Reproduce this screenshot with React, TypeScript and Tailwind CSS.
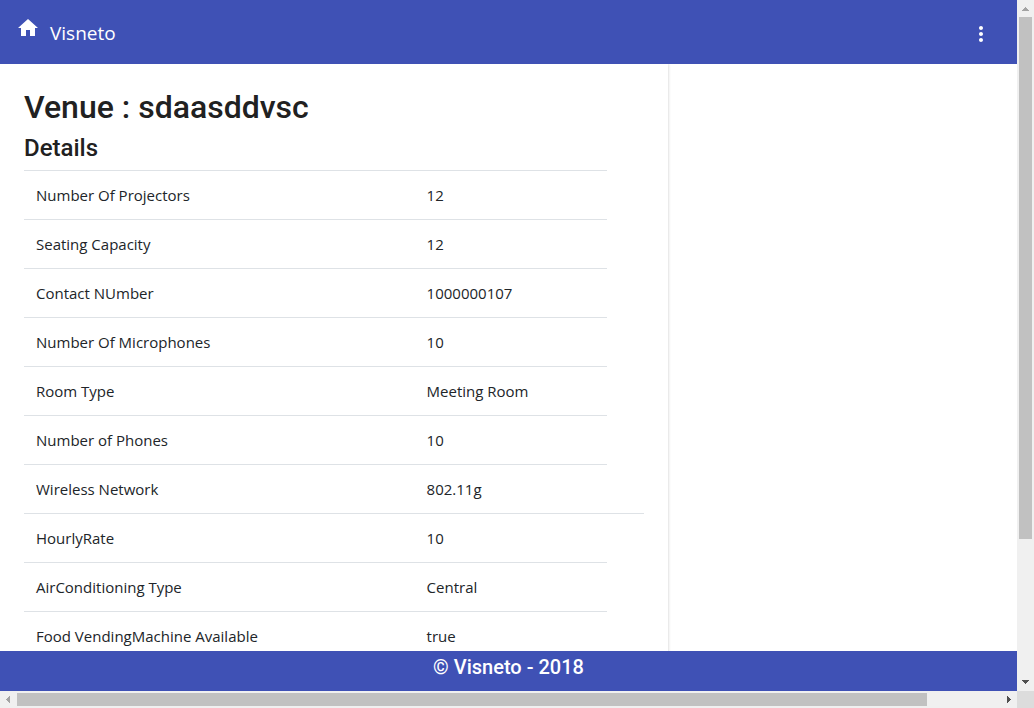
import { MdHome, MdMoreVert } from 'react-icons/md';

type Row = { label: string; value: string; extended?: boolean };

const rows: Row[] = [
  { label: 'Number Of Projectors', value: '12' },
  { label: 'Seating Capacity', value: '12' },
  { label: 'Contact NUmber', value: '1000000107' },
  { label: 'Number Of Microphones', value: '10' },
  { label: 'Room Type', value: 'Meeting Room' },
  { label: 'Number of Phones', value: '10' },
  { label: 'Wireless Network', value: '802.11g' },
  { label: 'HourlyRate', value: '10', extended: true },
  { label: 'AirConditioning Type', value: 'Central' },
  { label: 'Food VendingMachine Available', value: 'true' },
];

function Header() {
  return (
    <header className="flex h-16 shrink-0 items-center justify-between bg-[#3f51b5] px-4 pt-0.5 text-white">
      <a href="#home" className="flex items-center gap-2.5">
        <MdHome className="mb-2.5 size-6" aria-hidden="true" />
        <span className="font-['Open_Sans','Noto_Sans',sans-serif] text-[19px] leading-7">Visneto</span>
      </a>
      <button type="button" aria-label="Menu" className="mt-0.5 flex w-10 items-center justify-center">
        <MdMoreVert className="size-6" />
      </button>
    </header>
  );
}

function DetailsTable() {
  return (
    <table className="w-full table-fixed border-collapse font-['Open_Sans','Noto_Sans',sans-serif] text-[15px] leading-6 text-[#212529]">
      <colgroup>
        <col className="w-[63%]" />
        <col className="w-[31%]" />
        <col className="w-[6%]" />
      </colgroup>
      <tbody>
        {rows.map((row) => (
          <tr key={row.label} className="h-[49px]">
            <th scope="row" className="border-t border-[#dee2e6] px-3 text-left font-normal">
              {row.label}
            </th>
            <td className="border-t border-[#dee2e6] px-3">{row.value}</td>
            {row.extended && <td className="border-t border-[#dee2e6]" />}
          </tr>
        ))}
      </tbody>
    </table>
  );
}

function VerticalScrollbar() {
  return (
    <div className="flex flex-col items-center bg-[#f0f0f0]" aria-hidden="true">
      <svg viewBox="0 0 17 17" className="size-[17px] shrink-0" shapeRendering="crispEdges">
        <path d="M8 7h1v1h1v1h1v1h1v1H5v-1h1V9h1V8h1z" fill="#a3a3a3" />
      </svg>
      <div className="w-[13px] flex-[522] bg-[#c1c1c1]" />
      <div className="flex-[135]" />
      <svg viewBox="0 0 17 17" className="size-[17px] shrink-0" shapeRendering="crispEdges">
        <path d="M5 6h7v1h-1v1h-1v1H9v1H8V9H7V8H6V7H5z" fill="#505050" />
      </svg>
    </div>
  );
}

function HorizontalScrollbar() {
  return (
    <div className="flex items-center bg-[#f0f0f0]" aria-hidden="true">
      <svg viewBox="0 0 17 17" className="size-[17px] shrink-0" shapeRendering="crispEdges">
        <path d="M6 8h1V7h1V6h1V5h1v7H9v-1H8v-1H7V9H6z" fill="#a3a3a3" />
      </svg>
      <div className="h-[13px] flex-[910] bg-[#c1c1c1]" />
      <div className="flex-[73]" />
      <svg viewBox="0 0 17 17" className="size-[17px] shrink-0" shapeRendering="crispEdges">
        <path d="M7 5h1v1h1v1h1v1h1v1h-1v1H9v1H8v1H7z" fill="#505050" />
      </svg>
    </div>
  );
}

export default function App() {
  return (
    <div className="grid h-screen grid-cols-[minmax(0,1fr)_17px] grid-rows-[minmax(0,1fr)_17px] overflow-hidden bg-white">
      <div className="flex min-h-0 flex-col">
        <Header />
        <main className="grid min-h-0 flex-1 grid-cols-[668fr_349fr] overflow-hidden font-[Roboto,sans-serif]">
          <section className="px-6 pt-6 shadow-[0_0_3px_rgba(0,0,0,0.22)]">
            <h1 className="mb-2 text-[32px] leading-[38px] font-medium text-[#212121]">Venue : sdaasddvsc</h1>
            <h2 className="mb-2 text-2xl leading-7 font-medium text-[#212121]">Details</h2>
            <DetailsTable />
          </section>
        </main>
        <footer className="h-10 shrink-0 bg-[#3f51b5] pt-1 text-center font-[Roboto,sans-serif] text-xl leading-6 font-medium text-white">
          © Visneto - 2018
        </footer>
      </div>
      <VerticalScrollbar />
      <HorizontalScrollbar />
      <div className="bg-[#dcdcdc]" />
    </div>
  );
}
